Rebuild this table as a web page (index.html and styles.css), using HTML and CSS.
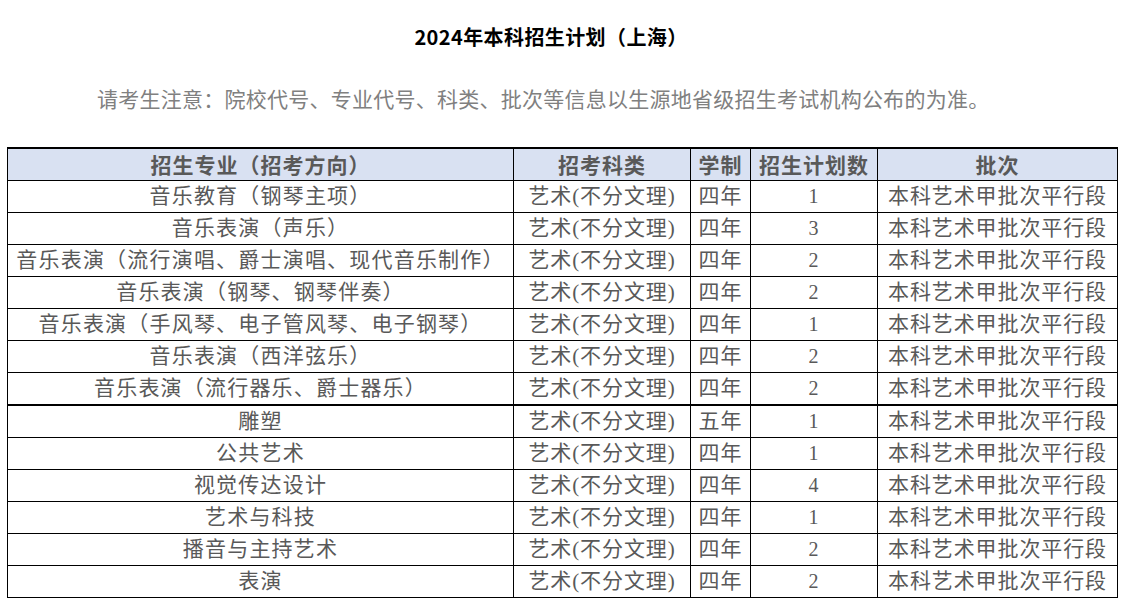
FILE: index.html
```html
<!DOCTYPE html>
<html lang="zh-CN">
<head>
<meta charset="utf-8">
<title>2024年本科招生计划（上海）</title>
<link rel="stylesheet" href="styles.css">
</head>
<body>
<div class="page">
  <h1 class="title">2024年本科招生计划（上海）</h1>
  <p class="notice">请考生注意：院校代号、专业代号、科类、批次等信息以生源地省级招生考试机构公布的为准。</p>
  <table class="plan">
    <colgroup>
      <col class="c1"><col class="c2"><col class="c3"><col class="c4"><col class="c5">
    </colgroup>
    <thead>
      <tr class="head"><th>招生专业（招考方向）</th><th>招考科类</th><th>学制</th><th>招生计划数</th><th>批次</th></tr>
    </thead>
    <tbody>
      <tr><td>音乐教育（钢琴主项）</td><td>艺术(不分文理)</td><td>四年</td><td class="num">1</td><td>本科艺术甲批次平行段</td></tr>
      <tr><td>音乐表演（声乐）</td><td>艺术(不分文理)</td><td>四年</td><td class="num">3</td><td>本科艺术甲批次平行段</td></tr>
      <tr><td>音乐表演（流行演唱、爵士演唱、现代音乐制作）</td><td>艺术(不分文理)</td><td>四年</td><td class="num">2</td><td>本科艺术甲批次平行段</td></tr>
      <tr><td>音乐表演（钢琴、钢琴伴奏）</td><td>艺术(不分文理)</td><td>四年</td><td class="num">2</td><td>本科艺术甲批次平行段</td></tr>
      <tr><td>音乐表演（手风琴、电子管风琴、电子钢琴）</td><td>艺术(不分文理)</td><td>四年</td><td class="num">1</td><td>本科艺术甲批次平行段</td></tr>
      <tr><td>音乐表演（西洋弦乐）</td><td>艺术(不分文理)</td><td>四年</td><td class="num">2</td><td>本科艺术甲批次平行段</td></tr>
      <tr><td>音乐表演（流行器乐、爵士器乐）</td><td>艺术(不分文理)</td><td>四年</td><td class="num">2</td><td>本科艺术甲批次平行段</td></tr>
      <tr class="split"><td>雕塑</td><td>艺术(不分文理)</td><td>五年</td><td class="num">1</td><td>本科艺术甲批次平行段</td></tr>
      <tr><td>公共艺术</td><td>艺术(不分文理)</td><td>四年</td><td class="num">1</td><td>本科艺术甲批次平行段</td></tr>
      <tr><td>视觉传达设计</td><td>艺术(不分文理)</td><td>四年</td><td class="num">4</td><td>本科艺术甲批次平行段</td></tr>
      <tr><td>艺术与科技</td><td>艺术(不分文理)</td><td>四年</td><td class="num">1</td><td>本科艺术甲批次平行段</td></tr>
      <tr><td>播音与主持艺术</td><td>艺术(不分文理)</td><td>四年</td><td class="num">2</td><td>本科艺术甲批次平行段</td></tr>
      <tr><td>表演</td><td>艺术(不分文理)</td><td>四年</td><td class="num">2</td><td>本科艺术甲批次平行段</td></tr>
    </tbody>
  </table>
</div>
</body>
</html>
```
FILE: styles.css
```css
html, body {
  margin: 0;
  padding: 0;
  background: #ffffff;
}

.page {
  padding: 0 5px 0 7px;
}

.title {
  margin: 0 22px 0 0;
  padding-top: 23px;
  font-family: "Noto Sans CJK SC", "Liberation Sans", sans-serif;
  font-size: 20px;
  letter-spacing: 0.4px;
  line-height: 28px;
  font-weight: 700;
  color: #000000;
  text-align: center;
}

.notice {
  margin: 34px 0 0 90px;
  font-family: "Liberation Serif", "Noto Sans CJK SC", serif;
  font-size: 21px;
  letter-spacing: 0.25px;
  line-height: 30px;
  color: #808080;
  white-space: nowrap;
}

.plan {
  margin-top: 32px;
  width: 1110px;
  table-layout: fixed;
  border-collapse: collapse;
  border-top: 2px solid #000000;
  font-family: "Liberation Serif", "Noto Sans CJK SC", serif;
  font-size: 21px;
  color: #595959;
}

.c1 { width: 506px; }
.c2 { width: 177px; }
.c3 { width: 60px; }
.c4 { width: 127px; }
.c5 { width: 240px; }

.plan th,
.plan td {
  border: 1px solid #000000;
  padding: 0 0 1px;
  height: 30px;
  text-align: center;
  white-space: nowrap;
  letter-spacing: 0.9px;
  line-height: 30px;
  overflow: hidden;
}

.plan td:first-child {
  letter-spacing: 1.2px;
}

.plan th {
  background: #d9e1f2;
  font-family: "Noto Sans CJK SC", "Liberation Sans", sans-serif;
  font-weight: 700;
  color: #595959;
  letter-spacing: 1px;
}

.plan .num {
  font-size: 20px;
}

.plan .split td {
  border-top: 2px solid #000000;
}
```
